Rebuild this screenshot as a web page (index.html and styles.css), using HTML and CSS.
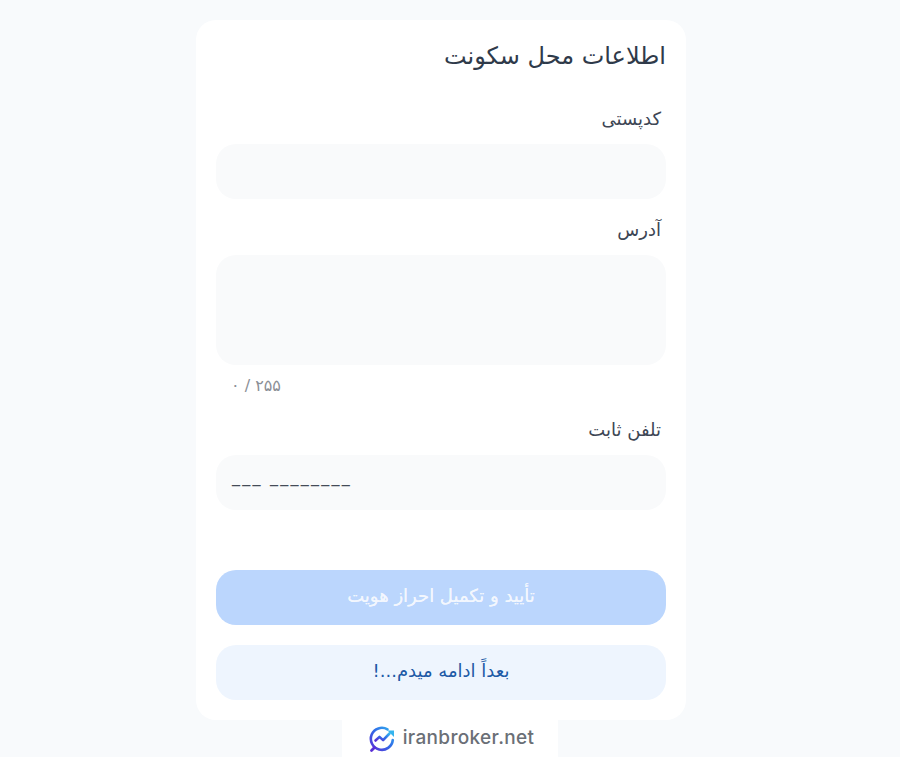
FILE: index.html
```html
<!DOCTYPE html>
<html lang="fa" dir="rtl">
<head>
<meta charset="utf-8">
<title>اطلاعات محل سکونت</title>
<link rel="stylesheet" href="styles.css">
</head>
<body>
<main class="page">
  <form class="card">
    <h1 class="title">اطلاعات محل سکونت</h1>
    <div class="field field-first">
      <label class="label">کدپستی</label>
      <div class="input"></div>
    </div>
    <div class="field field-address">
      <label class="label">آدرس</label>
      <div class="input textarea"></div>
      <div class="counter" dir="ltr">۰ / ۲۵۵</div>
    </div>
    <div class="field field-phone">
      <label class="label">تلفن ثابت</label>
      <div class="input mask" dir="ltr">___ ________</div>
    </div>
    <button type="button" class="btn btn-primary">تأیید و تکمیل احراز هویت</button>
    <button type="button" class="btn btn-secondary">بعداً ادامه میدم...!</button>
  </form>
  <footer class="brand" dir="ltr">
    <svg class="logo" viewBox="0 0 28 28" width="28" height="28" aria-hidden="true">
      <defs>
        <linearGradient id="g" x1="0" y1="1" x2="1" y2="0">
          <stop offset="0" stop-color="#5b2fd6"/>
          <stop offset="0.55" stop-color="#2f6fe8"/>
          <stop offset="1" stop-color="#35b4ee"/>
        </linearGradient>
      </defs>
      <path d="M19.5 4.4A11 11 0 1 0 24.8 15" fill="none" stroke="url(#g)" stroke-width="2.6" stroke-linecap="round"/>
      <path d="M7.5 15.5l4-3.6 3.6 3.2 6.4-6.6" fill="none" stroke="url(#g)" stroke-width="2.6" stroke-linecap="round" stroke-linejoin="round"/>
      <path d="M19.5 5.5h6.5V12z" fill="#35b4ee"/>
      <path d="M6.5 22.5l-3 3" fill="none" stroke="#5b2fd6" stroke-width="2.8" stroke-linecap="round"/>
    </svg>
    <span class="brand-name">iranbroker.net</span>
  </footer>
</main>
</body>
</html>
```
FILE: styles.css
```css
* { box-sizing: border-box; }
html, body { margin: 0; height: 100%; }
body {
  background: #f8fafc;
  font-family: "DejaVu Sans", "Noto Sans", sans-serif;
  color: #374151;
  overflow: hidden;
}
.page {
  display: flex;
  flex-direction: column;
  align-items: center;
  padding-top: 20px;
}
.card {
  width: 490px;
  height: 700px;
  margin-right: 18px;
  background: #fff;
  border-radius: 20px;
  padding: 20px;
  display: flex;
  flex-direction: column;
}
.title {
  margin: 0;
  font-size: 24px;
  font-weight: 400;
  line-height: 32px;
  color: #2f3a4a;
}
.field { display: flex; flex-direction: column; }
.field-first { margin-top: 35px; }
.field-address { margin-top: 19px; }
.field-phone { margin-top: 23px; }
.label {
  font-size: 18px;
  line-height: 24px;
  height: 37px;
  padding-right: 5px;
  color: #3d4654;
}
.input {
  height: 55px;
  background: #f9fafb;
  border-radius: 20px;
}
.textarea { height: 110px; }
.counter {
  font-size: 16px;
  line-height: 20px;
  margin-top: 11px;
  margin-bottom: -1px;
  padding-left: 15px;
  color: #8b8f96;
  height: 20px;
}
.mask {
  font-size: 16px;
  letter-spacing: 2.25px;
  line-height: 44px;
  padding-left: 16px;
  color: #444b57;
}
.btn {
  display: block;
  width: 100%;
  height: 55px;
  border: 0;
  border-radius: 20px;
  font-family: inherit;
  font-size: 18px;
  padding: 0 0 4px;
}
.btn-primary {
  margin-top: 60px;
  background: #bbd6fd;
  color: #f3f7fe;
  text-shadow: 0 0 0.6px #f3f7fe;
}
.btn-secondary {
  margin-top: 20px;
  background: #eef5fe;
  color: #1d5aa6;
}
.brand {
  width: 216px;
  height: 37px;
  padding-left: 2px;
  background: #fff;
  display: flex;
  align-items: center;
  justify-content: center;
  gap: 7px;
}
.logo { flex: none; }
.brand-name {
  font-family: Inter, "Liberation Sans", sans-serif;
  font-size: 19px;
  font-weight: 500;
  color: #6a6f76;
  letter-spacing: 0.35px;
  position: relative;
  top: -1px;
}
```
